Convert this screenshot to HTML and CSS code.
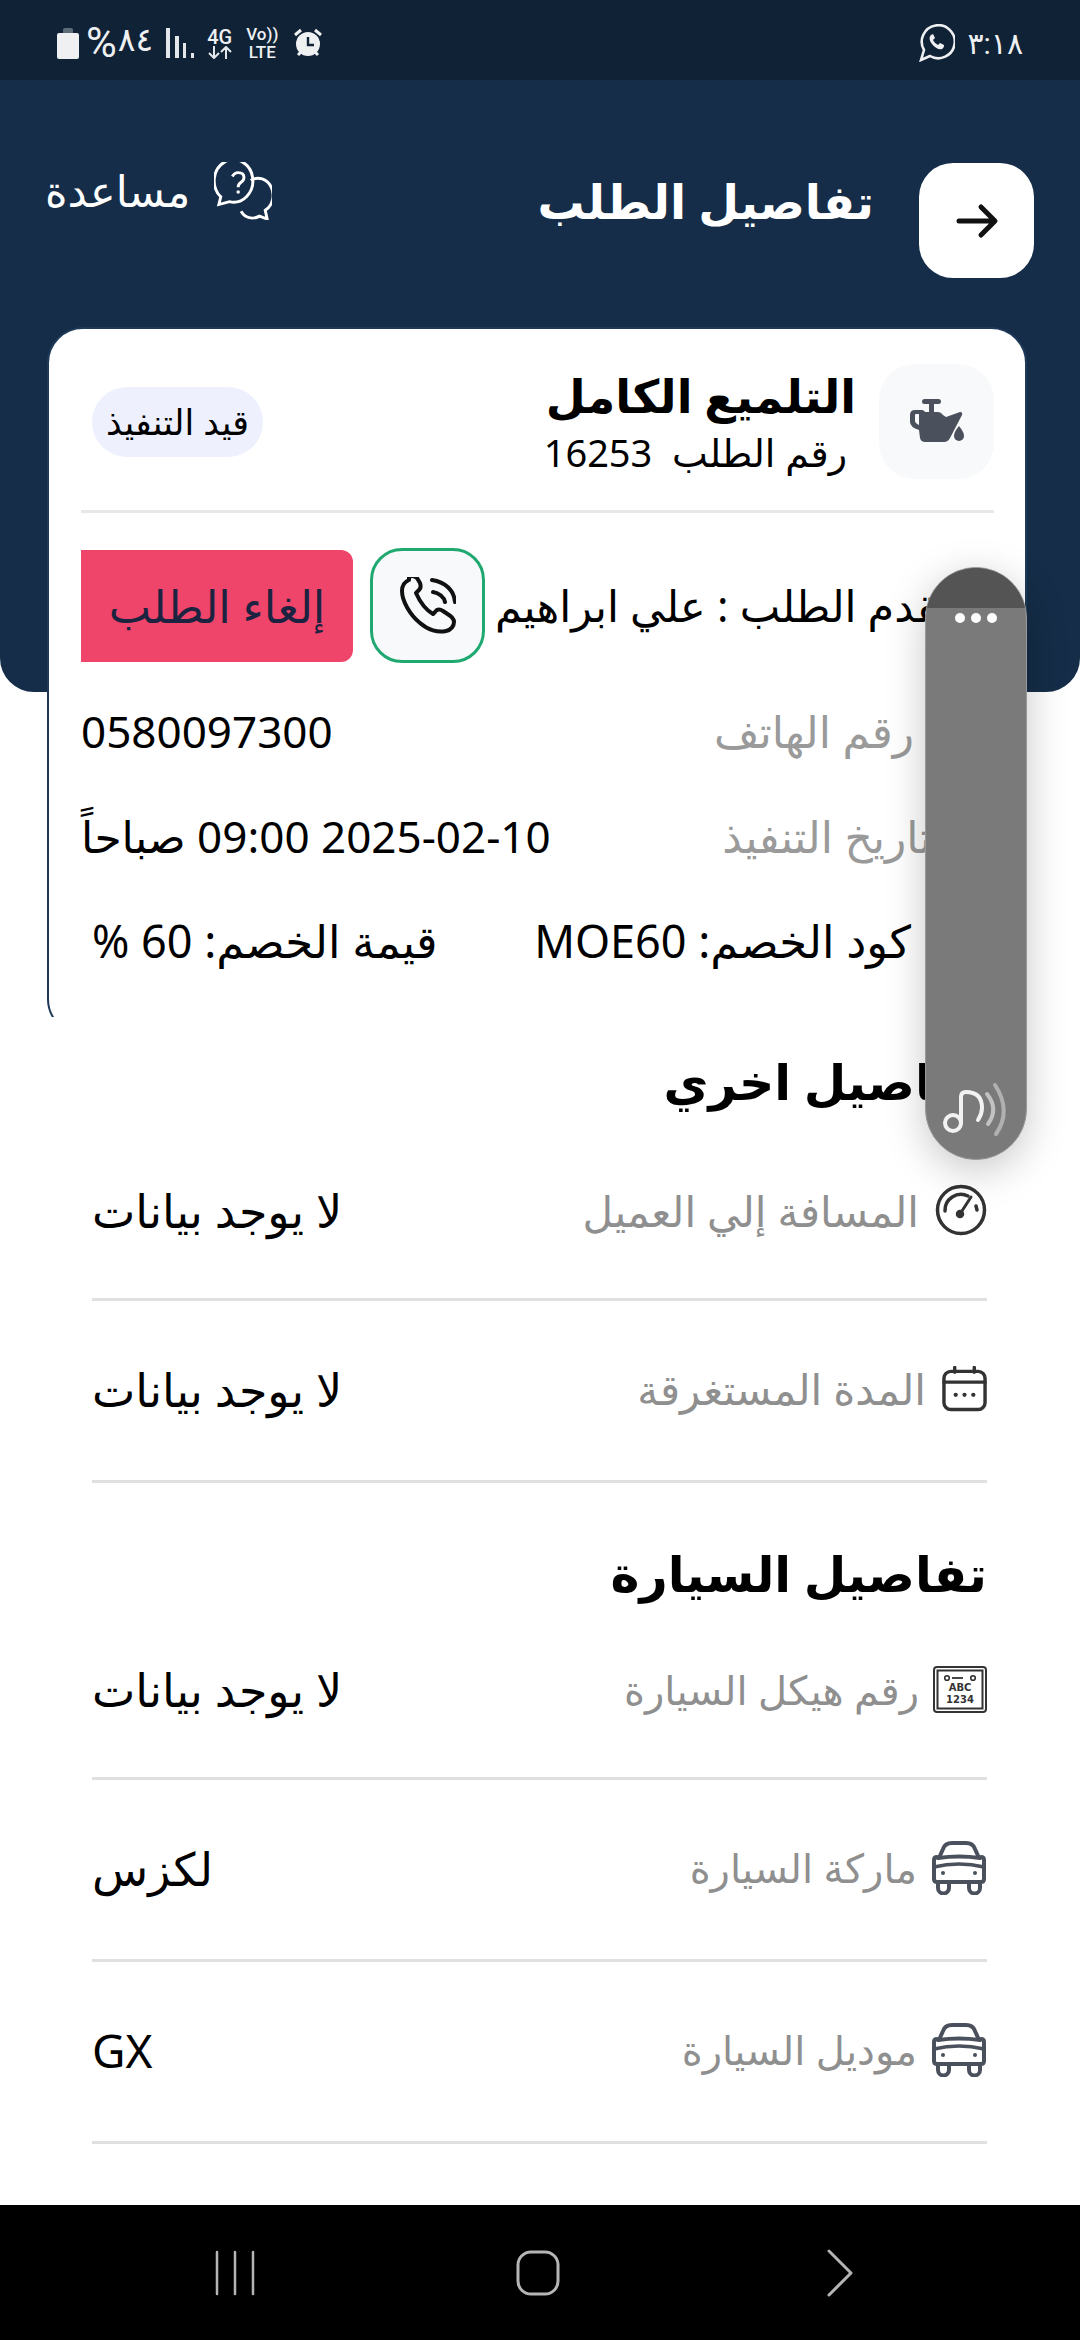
FILE: index.html
```html
<!DOCTYPE html>
<html lang="ar" dir="rtl">
<head>
    <meta charset="UTF-8">
    <meta name="viewport" content="width=device-width, initial-scale=1.0">
    <title>تفاصيل الطلب</title>
    <link rel="stylesheet" href="styles.css">
</head>
<body>
<div class="page">

    <!-- Status bar -->
    <div class="status-bar" dir="ltr">
        <div class="status-group">
            <svg class="st-battery" width="22" height="32" viewBox="0 0 22 32"><path d="M6 3q0-2 2-2h6q2 0 2 2v3H6z" fill="#5f6d7b"/><path d="M0 8q0-2 2-2h18q2 0 2 2v22q0 2-2 2H2q-2 0-2-2z" fill="#eef0f2"/></svg>
            <span class="st-percent">%</span><span class="st-battery-text">٨٤</span>
            <svg class="st-signal" width="28" height="30" viewBox="0 0 28 30" fill="#e3e7ea"><rect x="0" y="0" width="4" height="30"/><rect x="9" y="8" width="4" height="22"/><rect x="17" y="15" width="3" height="15"/><rect x="25" y="25" width="3" height="5"/></svg>
            <div class="st-stack">
                <span>4G</span>
                <svg width="24" height="13" viewBox="0 0 24 13" fill="none" stroke="#e3e7ea" stroke-width="2"><path d="M6 0v12M1 7l5 5 5-5M18 13V1M13 6l5-5 5 5"/></svg>
            </div>
            <div class="st-stack st-volte"><span>Vo))</span><span>LTE</span></div>
            <svg class="st-alarm" width="30" height="30" viewBox="0 0 30 30"><circle cx="15" cy="16" r="12" fill="#eef0f2"/><path d="M15 9v8h6" fill="none" stroke="#102236" stroke-width="2.4"/><path d="M2 7l6-5M28 7l-6-5M5 27l3-3M25 27l-3-3" stroke="#eef0f2" stroke-width="3" fill="none"/></svg>
        </div>
        <div class="status-group status-right">
            <svg width="36" height="38" viewBox="0 0 36 38" fill="none"><path d="M2 36l3-10A16.500 16.500 0 1 1 11 32z" stroke="#eef0f2" stroke-width="2.600"/><path d="M12 11c-2 2-2 5 1 9s7 6 10 5c2-1 2-3 2-4l-4-2-2 2c-2-1-4-3-5-5l2-2-2-4z" fill="#eef0f2"/></svg>
            <span class="st-time">٣:١٨</span>
        </div>
    </div>

    <div class="main">
        <!-- Blue header -->
        <div class="header">
            <button class="back-btn">
                <svg width="46" height="46" viewBox="0 0 46 46" fill="none" stroke="#111" stroke-width="5" stroke-linecap="round" stroke-linejoin="round"><path d="M5 23h34M27 9l14 14-14 14"/></svg>
            </button>
            <h1 class="page-title">تفاصيل الطلب</h1>
            <div class="help">
                <svg width="58" height="58" viewBox="0 0 60 60" fill="none" stroke="#fff" stroke-width="3"><path d="M5 44l2-8A20 22 0 1 1 16 41z"/><path d="M38 19A15 17 0 0 1 53 50l2 9-8-3c-7 4-15 2-19-5"/><path d="M19 15q2-4 6-4 6 0 6 5 0 3-3 5t-3 5"/><circle cx="25" cy="31" r="1.800" fill="#fff" stroke="none"/></svg>
                <span>مساعدة</span>
            </div>
        </div>

        <!-- Order card -->
        <div class="card-clip">
            <div class="card">
                <div class="card-head">
                    <div class="service-icon">
                        <svg width="58" height="46" viewBox="0 0 58 46" fill="#4a515c"><rect x="14" y="0" width="19" height="5" rx="2.500"/><rect x="21" y="4" width="5" height="9"/><path d="M2 16q0-5 5-5h7q2 0 3 2h13q3 0 5 3l3 2 14-5q3 0 2 3L42 39q-2 4-6 4H17q-4 0-5-4l-1-8q-9-3-9-8zm5 0v6q0 2 4 4V15H8q-1 0-1 1z" fill-rule="evenodd"/><path d="M51 27q5 6 5 10a5 5 0 0 1-10 0q0-4 5-10z"/></svg>
                    </div>
                    <div class="service-text">
                        <div class="service-name">التلميع الكامل</div>
                        <div class="order-no">رقم الطلب&nbsp; 16253</div>
                    </div>
                    <div class="badge">قيد التنفيذ</div>
                </div>
                <div class="divider"></div>

                <div class="requester-row">
                    <div class="requester">مقدم الطلب : علي ابراهيم</div>
                    <button class="call-btn">
                        <svg width="56" height="58" viewBox="0 0 56 58" fill="none" stroke="#111" stroke-width="4" stroke-linejoin="round" stroke-linecap="round"><path d="M9 3c-5 2-7 6-7 11 0 10 8 24 18 32 8 7 18 10 26 8 5-1 8-5 8-9 0-3-2-5-5-7l-6-4c-3-2-6-2-8 1l-2 2c-7-4-13-12-17-21l2-2c3-2 3-5 2-8l-3-5c-2-2-5-3-8-1z"/><path d="M32 3c13 2 22 10 23 22M33 15c6 1 11 5 12 10"/></svg>
                    </button>
                    <button class="cancel-btn">إلغاء الطلب</button>
                </div>

                <div class="info-row info-phone">
                    <span class="info-label">رقم الهاتف</span>
                    <span class="info-value">0580097300</span>
                </div>
                <div class="info-row info-date">
                    <span class="info-label">تاريخ التنفيذ</span>
                    <span class="info-value">2025-02-10 09:00 صباحاً</span>
                </div>
                <div class="info-row info-discount">
                    <span class="info-value">كود الخصم: MOE60</span>
                    <span class="info-value">قيمة الخصم: 60 %</span>
                </div>
            </div>
        </div>

        <!-- Other details -->
        <div class="details">
            <h2 class="section-title">تفاصيل اخري</h2>
            <div class="detail-row">
                <svg class="d-icon" width="52" height="52" viewBox="0 0 52 52" fill="none" stroke="#333" stroke-width="3.500" stroke-linecap="round"><circle cx="26" cy="26" r="23.500"/><path d="M10 27A16 16 0 0 1 33 12"/><path d="M41 22l1 4"/><path d="M25 30l11-17" stroke-width="3"/><circle cx="25" cy="30" r="2.500" fill="#333"/></svg>
                <span class="d-label">المسافة إلي العميل</span>
                <span class="d-value">لا يوجد بيانات</span>
            </div>
            <div class="detail-row">
                <svg class="d-icon" width="45" height="46" viewBox="0 0 46 46" fill="none" stroke="#333" stroke-width="3.500" stroke-linecap="round"><rect x="2" y="5" width="42" height="39" rx="7"/><path d="M2 16h42M13 1v5M33 1v5"/><circle cx="14" cy="29" r="2.200" fill="#333" stroke="none"/><circle cx="23" cy="29" r="2.200" fill="#333" stroke="none"/><circle cx="32" cy="29" r="2.200" fill="#333" stroke="none"/></svg>
                <span class="d-label">المدة المستغرقة</span>
                <span class="d-value">لا يوجد بيانات</span>
            </div>

            <h2 class="section-title section-car">تفاصيل السيارة</h2>
            <div class="detail-row car-row">
                <svg class="d-icon" width="54" height="47" viewBox="0 0 54 47"><rect x="1" y="1" width="52" height="45" rx="3" fill="none" stroke="#333" stroke-width="2"/><rect x="4.500" y="4.500" width="45" height="38" fill="none" stroke="#333" stroke-width="2"/><circle cx="14" cy="12" r="2.300" fill="none" stroke="#333" stroke-width="1.600"/><circle cx="40" cy="12" r="2.300" fill="none" stroke="#333" stroke-width="1.600"/><path d="M19 12h11" stroke="#333" stroke-width="1.800"/><text x="27" y="25" class="plate-text">ABC</text><text x="27" y="37" class="plate-text">1234</text></svg>
                <span class="d-label">رقم هيكل السيارة</span>
                <span class="d-value">لا يوجد بيانات</span>
            </div>
            <div class="detail-row car-row">
                <svg class="d-icon" width="56" height="54" viewBox="0 0 56 54"><use href="#car"/></svg>
                <span class="d-label">ماركة السيارة</span>
                <span class="d-value">لكزس</span>
            </div>
            <div class="detail-row car-row">
                <svg class="d-icon" width="56" height="54" viewBox="0 0 56 54"><use href="#car"/></svg>
                <span class="d-label">موديل السيارة</span>
                <span class="d-value">GX</span>
            </div>
        </div>

        <!-- Floating sound panel -->
        <div class="float-panel">
            <div class="float-top"></div>
            <div class="float-dots"><i></i><i></i><i></i></div>
            <svg class="float-note" width="102" height="90" viewBox="0 0 102 90" fill="none" stroke="#f2f2f2" stroke-width="4" stroke-linecap="round"><circle cx="28" cy="54" r="8"/><path d="M36 54V28q0-5 5-5 16 0 16 16 0 6-4 12"/><path d="M62 25q12 15 1 30" stroke="#c2c2c2"/><path d="M70 16q17 26 1 49" stroke="#b0b0b0"/></svg>
        </div>
    </div>

    <!-- Nav bar -->
    <div class="nav-bar" dir="ltr">
        <svg width="44" height="46" viewBox="0 0 44 46" stroke="#b5b5b5" stroke-width="2.500" stroke-linecap="round"><path d="M4 2v42M22 2v42M40 2v42"/></svg>
        <svg width="44" height="46" viewBox="0 0 44 46" fill="none" stroke="#b5b5b5" stroke-width="3"><rect x="2" y="2" width="40" height="42" rx="13"/></svg>
        <svg class="nav-back" width="28" height="48" viewBox="0 0 28 48" fill="none" stroke="#b5b5b5" stroke-width="3" stroke-linecap="round" stroke-linejoin="round"><path d="M3 2l22 22L3 46"/></svg>
    </div>

    <svg class="defs" width="0" height="0">
        <defs>
            <g id="car" fill="none" stroke="#4a515c" stroke-width="4" stroke-linejoin="round">
                <path d="M8 17l4-9q2-6 9-6h14q7 0 9 6l4 9"/>
                <path d="M3 19q0-3 3-3l1 1q21-3 42 0l1-1q3 0 3 3v19q0 3-3 3H6q-3 0-3-3z" fill="none"/>
                <path d="M3 26q25-6 50 0" stroke-width="3.500"/>
                <path d="M7 41v6a5 5 0 0 0 11 0v-6M38 41v6a5 5 0 0 0 11 0v-6"/>
                <circle cx="12" cy="32" r="2" fill="#4a515c" stroke="none"/>
                <circle cx="44" cy="32" r="2" fill="#4a515c" stroke="none"/>
            </g>
        </defs>
    </svg>
</div>
</body>
</html>
```

FILE: styles.css
```css
* {
    box-sizing: border-box;
}

body {
    margin: 0;
    background-color: #fff;
    font-family: "Noto Sans", "Open Sans", "DejaVu Sans", sans-serif;
    color: #000;
}

.page {
    width: 1080px;
    height: 2340px;
    display: flex;
    flex-direction: column;
    overflow: hidden;
}

.defs {
    position: absolute;
}

/* status bar */
.status-bar {
    height: 80px;
    flex-shrink: 0;
    display: flex;
    justify-content: space-between;
    align-items: center;
    padding: 6px 57px 0;
    background-color: #102236;
    color: #eef0f2;
}

.status-group {
    display: flex;
    align-items: center;
}

.st-percent {
    margin-left: 7px;
    font-family: Roboto, sans-serif;
    font-size: 42px;
    line-height: 40px;
}

.st-battery-text {
    margin-top: -6px;
    margin-left: 1px;
    font-family: Roboto, "Noto Sans", "DejaVu Sans", sans-serif;
    font-size: 33px;
    line-height: 30px;
}

.st-signal {
    margin-left: 13px;
}

.st-stack {
    display: flex;
    flex-direction: column;
    align-items: center;
    margin-left: 13px;
    font-family: Roboto, sans-serif;
    font-size: 20px;
    font-weight: 500;
    line-height: 18px;
}

.st-volte {
    margin-left: 14px;
    font-size: 17px;
}

.st-alarm {
    margin-left: 15px;
}

.status-right {
    gap: 12px;
}

.st-time {
    font-family: Roboto, "Noto Sans", "DejaVu Sans", sans-serif;
    font-size: 30px;
}

/* header */
.main {
    flex: 1;
    position: relative;
    background-color: #fff;
}

.header {
    height: 612px;
    display: flex;
    align-items: flex-start;
    padding: 83px 46px 0 45px;
    background-color: #152d48;
    border-radius: 0 0 34px 34px;
}

.back-btn {
    width: 115px;
    height: 115px;
    flex-shrink: 0;
    display: flex;
    justify-content: center;
    align-items: center;
    padding: 0;
    background-color: #fff;
    border: none;
    border-radius: 34px;
}

.page-title {
    margin: 0 45px 0 0;
    color: #fff;
    font-size: 47px;
    font-weight: 700;
    line-height: 76px;
}

.help {
    margin-right: auto;
    margin-top: -2px;
    display: flex;
    align-items: center;
    gap: 24px;
    color: #fff;
    font-size: 43px;
    line-height: 60px;
}

/* order card */
.card-clip {
    width: 980px;
    height: 690px;
    margin: -365px 53px 0 47px;
    overflow: hidden;
}

.card {
    height: 708px;
    padding: 35px 31px 0 32px;
    background-color: #fff;
    border: 2px solid #1f3a58;
    border-radius: 36px;
}

.card-head {
    display: flex;
    align-items: center;
}

.service-icon {
    width: 115px;
    height: 115px;
    flex-shrink: 0;
    display: flex;
    justify-content: center;
    align-items: center;
    background-color: #f8f9fb;
    border-radius: 36px;
}

.service-text {
    margin-right: 23px;
}

.service-name {
    font-size: 46px;
    font-weight: 700;
    line-height: 60px;
}

.order-no {
    margin-right: 9px;
    font-size: 38px;
    line-height: 54px;
}

.badge {
    margin-right: auto;
    margin-left: 11px;
    width: 171px;
    height: 70px;
    display: flex;
    justify-content: center;
    align-items: center;
    background-color: #eef1fd;
    border-radius: 35px;
    font-size: 35px;
    white-space: nowrap;
}

.divider {
    height: 3px;
    margin-top: 31px;
    background-color: #e8e8e8;
}

.requester-row {
    display: flex;
    justify-content: flex-end;
    align-items: center;
    margin-top: 35px;
    white-space: nowrap;
}

.requester {
    margin-left: 10px;
    font-size: 43px;
}

.call-btn {
    width: 115px;
    height: 115px;
    flex-shrink: 0;
    display: flex;
    justify-content: center;
    align-items: center;
    padding: 0;
    background-color: #f8f9fb;
    border: 3px solid #1fa971;
    border-radius: 32px;
}

.cancel-btn {
    width: 272px;
    height: 112px;
    flex-shrink: 0;
    margin-right: 17px;
    padding: 0;
    background-color: #f0456a;
    border: none;
    border-radius: 0 12px 12px 0;
    color: #1c2340;
    font-family: inherit;
    font-size: 45px;
}

.info-row {
    height: 105px;
    display: flex;
    justify-content: space-between;
    align-items: center;
    font-size: 44px;
    line-height: 60px;
    white-space: nowrap;
}

.info-phone {
    margin-top: 15px;
    padding-right: 80px;
}

.info-date {
    padding-right: 62px;
}

.info-discount {
    padding: 0 83px 0 11px;
    font-size: 45px;
}

.info-label {
    color: #9a9a9a;
}

/* detail rows */
.details {
    padding: 0 93px 0 92px;
}

.section-title {
    margin: 34px 0 15px;
    font-size: 49px;
    font-weight: 700;
    line-height: 60px;
}

.section-car {
    margin: 60px 0 2px;
}

.detail-row {
    height: 182px;
    padding-bottom: 4px;
    display: flex;
    align-items: center;
    border-bottom: 3px solid #e0e0e0;
}

.section-title + .detail-row {
    height: 175px;
}

.d-icon {
    flex-shrink: 0;
    margin-left: 16px;
}

.d-label {
    color: #8f8f8f;
    font-size: 42px;
    white-space: nowrap;
}

.d-value {
    margin-right: auto;
    font-size: 46px;
    white-space: nowrap;
}

.car-row .d-icon {
    margin-left: 14px;
}

.car-row .d-label {
    font-size: 40px;
}

.plate-text {
    font-family: "DejaVu Sans", sans-serif;
    font-size: 10px;
    font-weight: 700;
    fill: #333;
    text-anchor: middle;
}

/* floating panel */
.float-panel {
    position: absolute;
    top: 487px;
    left: 925px;
    width: 102px;
    height: 593px;
    overflow: hidden;
    background-color: #7a7a7a;
    border: 1px solid #999;
    border-radius: 51px;
    box-shadow: 0 10px 40px rgba(0, 0, 0, 0.22);
}

.float-top {
    height: 40px;
    background-color: #545454;
}

.float-dots {
    display: flex;
    justify-content: center;
    gap: 6px;
    margin-top: 5px;
}

.float-dots i {
    width: 10px;
    height: 10px;
    background-color: #fff;
    border-radius: 50%;
}

.float-note {
    position: absolute;
    left: -1px;
    bottom: 0;
}

/* nav bar */
.nav-bar {
    height: 135px;
    flex-shrink: 0;
    display: flex;
    align-items: center;
    gap: 259px;
    padding-left: 213px;
    background-color: #000;
}

.nav-back {
    margin-left: 7px;
}
```
